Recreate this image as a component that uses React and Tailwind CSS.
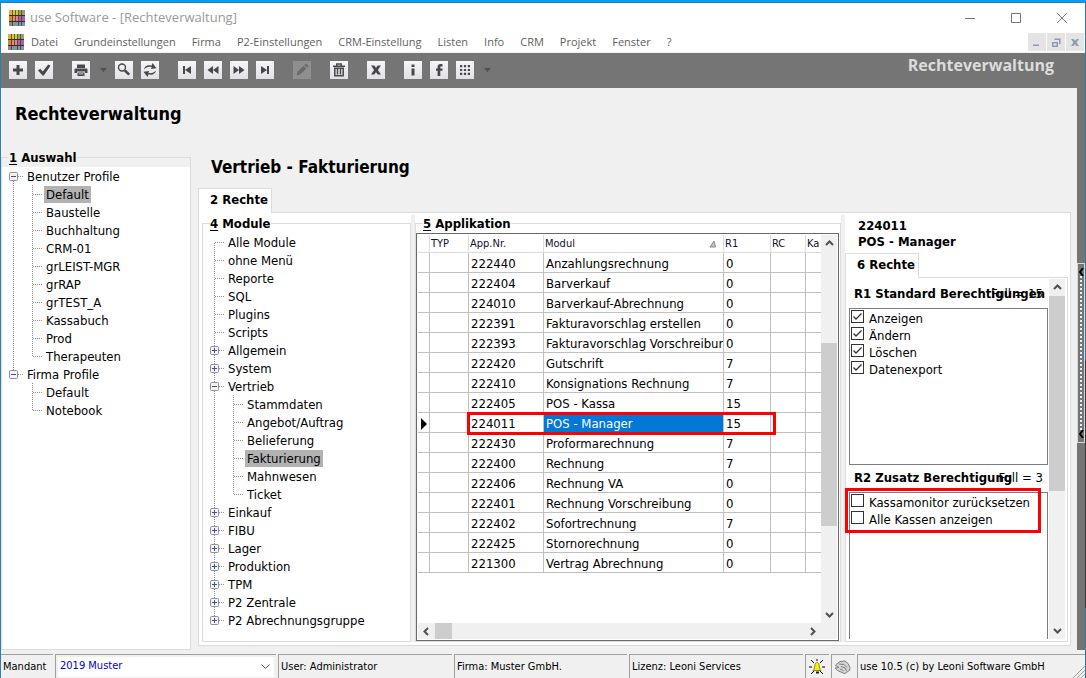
import React from 'react';

const menu = ["Datei", "Grundeinstellungen", "Firma", "P2-Einstellungen", "CRM-Einstellung", "Listen", "Info", "CRM", "Projekt", "Fenster", "?"];

const profiles = [
  { label: "Benutzer Profile", depth: 0, toggle: "minus", first: true },
  { label: "Default", depth: 1, through: true, selected: true },
  { label: "Baustelle", depth: 1, through: true },
  { label: "Buchhaltung", depth: 1, through: true },
  { label: "CRM-01", depth: 1, through: true },
  { label: "grLEIST-MGR", depth: 1, through: true },
  { label: "grRAP", depth: 1, through: true },
  { label: "grTEST_A", depth: 1, through: true },
  { label: "Kassabuch", depth: 1, through: true },
  { label: "Prod", depth: 1, through: true },
  { label: "Therapeuten", depth: 1, through: true, last: true },
  { label: "Firma Profile", depth: 0, toggle: "minus", last: true },
  { label: "Default", depth: 1 },
  { label: "Notebook", depth: 1, last: true },
];

const modules = [
  { label: "Alle Module", depth: 0, first: true },
  { label: "ohne Menü", depth: 0 },
  { label: "Reporte", depth: 0 },
  { label: "SQL", depth: 0 },
  { label: "Plugins", depth: 0 },
  { label: "Scripts", depth: 0 },
  { label: "Allgemein", depth: 0, toggle: "plus" },
  { label: "System", depth: 0, toggle: "plus" },
  { label: "Vertrieb", depth: 0, toggle: "minus" },
  { label: "Stammdaten", depth: 1, through: true },
  { label: "Angebot/Auftrag", depth: 1, through: true },
  { label: "Belieferung", depth: 1, through: true },
  { label: "Fakturierung", depth: 1, through: true, selected: true },
  { label: "Mahnwesen", depth: 1, through: true },
  { label: "Ticket", depth: 1, through: true, last: true },
  { label: "Einkauf", depth: 0, toggle: "plus" },
  { label: "FIBU", depth: 0, toggle: "plus" },
  { label: "Lager", depth: 0, toggle: "plus" },
  { label: "Produktion", depth: 0, toggle: "plus" },
  { label: "TPM", depth: 0, toggle: "plus" },
  { label: "P2 Zentrale", depth: 0, toggle: "plus" },
  { label: "P2 Abrechnungsgruppe", depth: 0, toggle: "plus", last: true },
];

const apps = [
  ["222440", "Anzahlungsrechnung", "0"],
  ["222404", "Barverkauf", "0"],
  ["224010", "Barverkauf-Abrechnung", "0"],
  ["222391", "Fakturavorschlag erstellen", "0"],
  ["222393", "Fakturavorschlag Vorschreibung", "0"],
  ["222420", "Gutschrift", "7"],
  ["222410", "Konsignations Rechnung", "7"],
  ["222405", "POS - Kassa", "15"],
  ["224011", "POS - Manager", "15"],
  ["222430", "Proformarechnung", "7"],
  ["222400", "Rechnung", "7"],
  ["222406", "Rechnung VA", "0"],
  ["222401", "Rechnung Vorschreibung", "0"],
  ["222402", "Sofortrechnung", "7"],
  ["222425", "Stornorechnung", "0"],
  ["221300", "Vertrag Abrechnung", "0"],
];

const icons = {
  plus: <path d="M7.5 4h3v3.5H14v3h-3.500V14h-3v-3.500H4v-3h3.500z" />,
  check: <path d="M3 9.500l2.200-1.700 2.600 2.800L13.200 3.500l2.300 1.200-6.700 9.800H7.500z" />,
  print: <path d="M5 3.500h8V7H5zM3.500 7.500h11a1 1 0 011 1V12H13v-1.500H5V12H2.500V8.500a1 1 0 011-1zM5.500 11.500h7V15h-7zM6.500 12.500v.8h5v-.8z" fillRule="evenodd" />,
  search: <g fill="none" stroke="currentColor"><circle cx="7" cy="6.500" r="3.500" strokeWidth="1.400" /><path d="M9.800 9.300l4.400 4.400" strokeWidth="2.600" /></g>,
  refresh: <path d="M3 8.500C3.500 5 7 3.500 10.500 4.700L11.500 2l4 5.200-5.700.8 1-1.700C8 5.300 5.500 6 3 8.500zM15 9.500c-.5 3.500-4 5-7.500 3.800L6.500 16l-4-5.200 5.700-.8-1 1.700c2.800 1 5.300.3 7.800-2.200z" />,
  first: <path d="M5 5h2v8H5zM13 5v8L7 9z" />,
  rewind: <path d="M9 5v8L3.500 9zM14.500 5v8L9 9z" />,
  forward: <path d="M3.500 5v8L9 9zM9 5v8l5.500-4z" />,
  last: <path d="M5 5v8l6-4zM11 5h2v8h-2z" />,
  edit: <path d="M3.500 14.500l1-3.800 6-6 2.800 2.800-6 6zM11.300 3.900l.9-.9c.5-.5 1-.5 1.500 0l1.300 1.300c.5.500.5 1 0 1.500l-.9.900z" />,
  trash: <g fill="none" stroke="currentColor" strokeWidth="1.500"><path d="M3 5.200h12M6.800 5V3h4.400v2M4.800 7v7.800h8.400V7M7.500 7.500v6M10.500 7.500v6M4 7.200h10" /></g>,
  close: <path d="M4 4.500h3.300L9 6.700l1.700-2.200H14L10.900 9l3.100 4.500h-3.300L9 11.300l-1.700 2.200H4L7.100 9z" />,
  info: <path d="M7.500 3.500h3V6h-3zM7.500 7.500h3v7h-3z" />,
  facebook: <path d="M12.500 3.200v2.300h-1.300c-.7 0-.9.300-.9.900v1.100h2.200v2.200h-2.200V15H7.600V9.700H6V7.500h1.600V6c0-2 1-3 2.900-3 .9 0 1.500.1 2 .2z" />,
  grid: <path d="M4 4h2.200v2.200H4zM7.900 4h2.200v2.200H7.900zM11.800 4H14v2.200h-2.200zM4 7.900h2.200v2.200H4zM7.900 7.900h2.200v2.200H7.900zM11.800 7.900H14v2.200h-2.200zM4 11.800h2.200V14H4zM7.900 11.800h2.200V14H7.900zM11.800 11.800H14V14h-2.200z" />,
};

const toolbar = [
  ["plus", "check"],
  ["print", "arrow"],
  ["search", "refresh"],
  ["first", "rewind", "forward", "last"],
  ["edit"],
  ["trash"],
  ["close"],
  ["info", "facebook", "grid", "arrow"],
];

const Logo = () => (
  <svg viewBox="0 0 16 16" className="size-4 shrink-0" shapeRendering="crispEdges" aria-hidden="true">
    <rect width="16" height="16" fill="#8a8a72" />
    <path d="M0 0h4v5H0z" fill="#e0b03c" />
    <path d="M4 0h6v5H4z" fill="#cfd02c" />
    <path d="M10 0h6v5h-6z" fill="#9aa070" />
    <path d="M0 6h4v5H0z" fill="#d48a1e" />
    <path d="M4 6h6v5H4z" fill="#dc8a86" />
    <path d="M10 6h6v5h-6z" fill="#a765a8" />
    <path d="M0 12h4v4H0z" fill="#8f8a86" />
    <path d="M4 12h12v4H4z" fill="#7d96a4" />
    <path d="M0 5h16v1H0zM0 11h16v1H0z" fill="#3a2c2c" />
    <path d="M3 0h1v16H3zM6 0h1v12H6zM9 0h1v16H9zM12 0h1v16h-1z" fill="#3a2c2c" fillOpacity="0.7" />
  </svg>
);

const Chevron = ({ dir }) => {
  const d = { up: "M1 6l3.500-3.500L8 6", down: "M1 3l3.500 3.500L8 3", left: "M6 1L2.500 4.500 6 8", right: "M3 1l3.500 3.500L3 8" }[dir];
  return (
    <svg viewBox="0 0 9 9" className="size-[9px]" fill="none" stroke="#505050" strokeWidth="2" aria-hidden="true"><path d={d} /></svg>
  );
};

const Guide = ({ first, last, toggle, elbow = true }) => (
  <svg viewBox="0 0 16 18" className="w-4 h-[18px] shrink-0" fill="none" aria-hidden="true">
    <path d={`M4.500 ${first ? 10 : 0}V${last ? 10 : 18}`} stroke="#909090" strokeDasharray="1 1" />
    {elbow && <path d="M5 9.500h10" stroke="#909090" strokeDasharray="1 1" />}
    {toggle && (
      <>
        <rect x="0.500" y="5.500" width="8" height="8" rx="1" fill="#f4f4f4" stroke="#919191" />
        <path d="M2 9.500h5" stroke="#3c50a0" />
        {toggle === "plus" && <path d="M4.500 7v5" stroke="#3c50a0" />}
      </>
    )}
  </svg>
);

const Tree = ({ items }) => (
  <ul className="pl-[7px] text-[13px] leading-[17px]">
    {items.map((item, i) => (
      <li key={i} className="flex h-[18px] items-center whitespace-nowrap">
        {item.depth === 1 && (
          <span className="w-[19px] shrink-0">{item.through && <Guide elbow={false} />}</span>
        )}
        {item.toggle ? (
          <button type="button" aria-label={item.label + " umschalten"}><Guide {...item} /></button>
        ) : (
          <Guide {...item} />
        )}
        <button type="button" className={`px-0.5 ${item.selected ? 'bg-[#b2b2b2]' : ''}`}>{item.label}</button>
      </li>
    ))}
  </ul>
);

const Legend = ({ num, text }) => (
  <legend className="ml-[7px] h-5 text-[13px] leading-[22px] font-bold"><span className="underline underline-offset-2">{num}</span> {text}</legend>
);

const CheckRow = ({ label, checked }) => (
  <label className="flex h-[17px] items-center gap-[5px] whitespace-nowrap">
    <span className="relative size-[13px] shrink-0 mb-1">
      <input type="checkbox" defaultChecked={checked} className="peer block size-[13px] appearance-none border border-[#333] bg-white" />
      <svg viewBox="0 0 13 13" className="absolute inset-0 hidden peer-checked:block pointer-events-none" fill="none" stroke="#333" strokeWidth="1.300"><path d="M2.500 6.500L5 9l5.500-5.500" /></svg>
    </span>
    {label}
  </label>
);

const StatusCell = ({ className, children }) => (
  <div className={`flex items-center border-l border-t border-[#a0a0a0] pl-0.5 whitespace-nowrap ${className}`}>{children}</div>
);

const App = () => {
  return (
    <div className="h-screen min-h-[640px] flex flex-col overflow-hidden bg-[#f0f0f0] text-black font-['DejaVu_Sans_Condensed','DejaVu_Sans',sans-serif]">
      <div className="h-[3px] shrink-0 bg-[#0a9bf2] border-b border-[#2b7db0]"></div>

      <div className="flex-1 min-h-0 flex">
        <div className="flex-1 min-w-0 flex flex-col border-l border-[#2a82b0]">

          {/* Title bar */}
          <header className="shrink-0 bg-white font-['Open_Sans',sans-serif]">
            <div className="flex h-[29px] items-center pl-2 text-[13px] text-[#999]">
              <Logo />
              <span className="ml-[5px] flex-1 pt-px">use Software - [Rechteverwaltung]</span>
              <div className="flex gap-9 pr-[18px]">
                <button type="button" aria-label="Minimieren"><svg viewBox="0 0 10 10" className="size-[10px]" stroke="#777"><path d="M0 5.500h10" /></svg></button>
                <button type="button" aria-label="Maximieren"><svg viewBox="0 0 10 10" className="size-[10px]" fill="none" stroke="#777"><path d="M.5.500h9v9h-9z" /></svg></button>
                <button type="button" aria-label="Schließen"><svg viewBox="0 0 10 10" className="size-[10px]" stroke="#777"><path d="M0 0l10 10M10 0L0 10" /></svg></button>
              </div>
            </div>
            <div className="flex h-[21px] items-center border-b border-[#f0f0f0] pl-[7px] text-[11px] text-[#5f5f5f]">
              <Logo />
              <nav className="ml-[7px] flex flex-1 gap-4 whitespace-nowrap pt-px">
                {menu.map((m) => <button key={m} type="button">{m}</button>)}
              </nav>
              <div className="flex gap-px pr-px">
                {["M5 11.500h6v1.500H5z", "M5 9h6v5H5zM6.500 10.500v2h3v-2zM7.500 5.500h6v5.500h-1.500V7h-4.500z", "M5 6h2.500l1.500 2 1.500-2H13l-2.500 3.500L13 13h-2.500L9 11l-1.500 2H5l2.500-3.500z"].map((d, i) => (
                  <button key={i} type="button" aria-label={["Fenster minimieren", "Fenster wiederherstellen", "Fenster schließen"][i]} className="size-[18px] bg-[#e4e4e4]">
                    <svg viewBox="0 0 18 18" className="size-[18px]" fill="#8b9bb0" fillRule="evenodd"><path d={d} /></svg>
                  </button>
                ))}
              </div>
            </div>
          </header>

          {/* Toolbar */}
          <div className="flex h-[35px] shrink-0 items-center bg-[#757575] pl-2 pb-px">
            <div className="flex flex-1 gap-[19px]">
              {toolbar.map((group, i) => (
                <div key={i} className={`flex gap-2 ${i === 1 ? '-mr-[13px]' : ''}`}>
                  {group.map((name) => name === "arrow" ? (
                    <button key={name} type="button" aria-label="Auswahl" className="px-0.5">
                      <svg viewBox="0 0 7 4" className="w-[7px] h-1" fill="#505050"><path d="M0 0h7L3.500 4z" /></svg>
                    </button>
                  ) : (
                    <button key={name} type="button" aria-label={name} className={`size-[18px] ${name === "edit" ? 'bg-[#8f8f8f] text-[#6a6a6a]' : 'bg-linear-to-b from-[#f6f6f8] to-[#e0e0e6] text-[#484848]'}`}>
                      <svg viewBox="0 0 18 18" className="size-[18px]" fill="currentColor">{icons[name]}</svg>
                    </button>
                  ))}
                </div>
              ))}
            </div>
            <span className="mb-[11px] pr-[31px] text-base font-bold text-[#dcdcdc] font-['Open_Sans',sans-serif]">Rechteverwaltung</span>
          </div>

          <div className="flex-1 min-h-0 flex">
            <main className="flex-1 min-w-0 flex flex-col">
              <h1 className="flex h-[59px] shrink-0 items-center pl-[14px] pb-2 text-lg font-bold">Rechteverwaltung</h1>

              <div className="flex flex-1 min-h-0 gap-[7px] pr-[6px]">
                <fieldset className="flex w-[190px] shrink-0 flex-col border border-[#dcdcdc]">
                  <Legend num="1" text="Auswahl" />
                  <div className="h-full bg-white">
                    <Tree items={profiles} />
                  </div>
                </fieldset>

                <section className="flex flex-1 min-w-0 flex-col pb-1">
                  <h2 className="h-[41px] shrink-0 pl-[13px] text-[17px] leading-10 font-bold">Vertrieb - Fakturierung</h2>
                  <div className="flex shrink-0">
                    <button type="button" className="relative -mb-px h-[25px] border border-b-0 border-[#dcdcdc] bg-white pl-[11px] pr-[3px] pb-0.5 text-[13px] font-bold">2 Rechte</button>
                  </div>

                  <div className="flex flex-1 min-h-0 border border-[#dcdcdc] bg-white pl-[3px] pr-px pb-[3px]">
                    <fieldset className="w-[209px] shrink-0 border border-[#dcdcdc]">
                      <Legend num="4" text="Module" />
                      <Tree items={modules} />
                    </fieldset>
                    <div className="mt-0.5 w-[4px] shrink-0 bg-[#f0f0f0]"></div>

                    <fieldset className="flex flex-1 min-w-0 flex-col border border-[#dcdcdc]">
                      <Legend num="5" text="Applikation" />
                      <div className="flex h-full flex-col border border-[#696969] p-px mr-px">
                        <div className="flex flex-1 min-h-0">
                          <div className="flex-1 min-w-0 overflow-hidden">
                            <table className="w-full table-fixed border-separate border-spacing-0 text-[13px] leading-4 whitespace-nowrap">
                              <colgroup>
                                <col className="w-3" />
                                <col className="w-[39px]" />
                                <col className="w-[75px]" />
                                <col className="w-[180px]" />
                                <col className="w-[47px]" />
                                <col className="w-[35px]" />
                                <col />
                              </colgroup>
                              <thead>
                                <tr className="text-left text-[11px] text-[#101030]">
                                  {["", "TYP", "App.Nr.", "Modul", "R1", "RC", "Ka"].map((h, i) => (
                                    <th key={i} className="h-[18px] overflow-hidden border-r border-b border-[#dcdcdc] pl-px font-normal last:border-r-0">
                                      {h === "Modul" ? (
                                        <span className="flex items-center justify-between pr-[6px]">
                                          Modul
                                          <svg viewBox="0 0 8 8" className="size-2" fill="#c0c0c0" stroke="#8c8c8c"><path d="M1 7L5 1l1.500 6z" /></svg>
                                        </span>
                                      ) : h}
                                    </th>
                                  ))}
                                </tr>
                              </thead>
                              <tbody>
                                {apps.map(([nr, name, r1]) => {
                                  const active = nr === "224011";
                                  return (
                                    <tr key={nr} className="[&>td]:h-5 [&>td]:border-r [&>td]:border-b [&>td]:border-[#c0c0c0] [&>td]:pt-0.5 [&>td:last-child]:border-r-0">
                                      <td>{active && <svg viewBox="0 0 6 12" className="ml-[3px] w-[6px] h-3"><path d="M0 0l6 6-6 6z" /></svg>}</td>
                                      <td></td>
                                      <td className="relative pl-0.5">
                                        {nr}
                                        {active && <span className="absolute -left-0.5 -top-px z-10 h-[23px] w-[309px] border-3 border-[#ff0000]"></span>}
                                      </td>
                                      <td className={`overflow-hidden pl-0.5 ${active ? 'bg-[#0078d7] text-white' : ''}`}>{name}</td>
                                      <td className="pl-0.5">{r1}</td>
                                      <td></td>
                                      <td></td>
                                    </tr>
                                  );
                                })}
                              </tbody>
                            </table>
                          </div>
                          <div className="flex w-4 shrink-0 flex-col bg-[#f0f0f0]">
                            <button type="button" aria-label="Nach oben" className="flex h-[17px] items-center justify-center"><Chevron dir="up" /></button>
                            <div className="mt-[91px] h-[183px] bg-[#cdcdcd]"></div>
                            <button type="button" aria-label="Nach unten" className="mt-auto flex h-[17px] items-center justify-center"><Chevron dir="down" /></button>
                          </div>
                        </div>
                        <div className="flex h-4 shrink-0 bg-[#f0f0f0] pr-4">
                          <button type="button" aria-label="Nach links" className="flex w-[17px] items-center justify-center"><Chevron dir="left" /></button>
                          <div className="w-[17px] bg-[#cdcdcd]"></div>
                          <button type="button" aria-label="Nach rechts" className="ml-auto flex w-[17px] items-center justify-center"><Chevron dir="right" /></button>
                        </div>
                      </div>
                    </fieldset>
                    <div className="mt-0.5 w-[4px] shrink-0 bg-[#f0f0f0]"></div>

                    <section className="flex w-[224px] shrink-0 flex-col text-[13px]">
                      <div className="h-10 shrink-0 pl-[13px] pt-[5px] leading-4 font-bold">
                        <p>224011</p>
                        <p>POS - Manager</p>
                      </div>
                      <div className="flex shrink-0">
                        <button type="button" className="relative -mb-px h-[25px] border border-[#dcdcdc] border-b-0 bg-white pl-[11px] pr-[3px] pb-0.5 font-bold">6 Rechte</button>
                      </div>
                      <div className="mr-px flex flex-1 min-h-0 border border-[#dcdcdc] pl-[3px] pt-px pb-0.5">
                        <div className="flex flex-1 min-w-0 flex-col">
                          <div className="relative h-[29px] shrink-0 pl-[5px] leading-[30px] whitespace-nowrap">
                            <b>R1 Standard Berechtigungen</b>
                            <span className="absolute right-[5px] top-0">Full = 15</span>
                          </div>
                          <div className="h-[157px] shrink-0 border border-[#7b7b84] pl-px pt-px">
                            <CheckRow label="Anzeigen" checked />
                            <CheckRow label="Ändern" checked />
                            <CheckRow label="Löschen" checked />
                            <CheckRow label="Datenexport" checked />
                          </div>
                          <div className="relative h-[27px] shrink-0 pl-[5px] leading-[26px] whitespace-nowrap">
                            <b>R2 Zusatz Berechtigung</b>
                            <span className="absolute right-[5px] top-0">Full = 3</span>
                          </div>
                          <div className="relative flex-1 border border-b-0 border-[#7b7b84] pl-px pt-px">
                            <CheckRow label="Kassamonitor zurücksetzen" />
                            <CheckRow label="Alle Kassen anzeigen" />
                            <span className="pointer-events-none absolute -left-[5px] -top-[5px] h-[45px] w-[196px] border-3 border-[#ff0000]"></span>
                          </div>
                        </div>
                        <div className="ml-px mr-0.5 flex w-4 shrink-0 flex-col bg-[#f0f0f0]">
                          <button type="button" aria-label="Nach oben" className="flex h-[17px] items-center justify-center"><Chevron dir="up" /></button>
                          <div className="h-[195px] bg-[#cdcdcd]"></div>
                          <button type="button" aria-label="Nach unten" className="mt-auto flex h-[17px] items-center justify-center"><Chevron dir="down" /></button>
                        </div>
                      </div>
                    </section>
                  </div>
                </section>
              </div>
            </main>

            {/* collapsed side panel */}
            <aside className="w-2 shrink-0 bg-[#757575] pt-[175px]">
              <button type="button" aria-label="Seitenleiste öffnen" className="flex h-[180px] w-full flex-col items-center justify-between border border-[#d8d8d8] bg-[#757575] py-1">
                <svg viewBox="0 0 5 8" className="w-[5px] h-2" fill="none" stroke="#000" strokeWidth="2"><path d="M4 0L1 4l3 4" /></svg>
                <span className="flex-1 border-l-2 border-dotted border-[#e4f0fa]"></span>
                <svg viewBox="0 0 5 8" className="w-[5px] h-2" fill="none" stroke="#000" strokeWidth="2"><path d="M4 0L1 4l3 4" /></svg>
              </button>
            </aside>
          </div>

          {/* Status bar */}
          <footer className="flex h-[28px] shrink-0 gap-0.5 pt-1 text-[11px]">
            <StatusCell className="w-[52px] border-l-0 pt-px"><label htmlFor="mandant">Mandant</label></StatusCell>
            <StatusCell className="w-[221px]">
              <span className="relative w-full pr-0.5">
                <select id="mandant" className="block h-5 w-full appearance-none bg-white pl-0.5 text-[#0000e0]">
                  <option>2019 Muster</option>
                </select>
                <svg viewBox="0 0 9 6" className="pointer-events-none absolute right-[6px] top-[7px] w-[9px] h-[6px]" fill="none" stroke="#555"><path d="M.5.500l4 4 4-4" /></svg>
              </span>
            </StatusCell>
            <StatusCell className="w-[174px] pt-px">User: Administrator</StatusCell>
            <StatusCell className="w-[173px] pt-px">Firma: Muster GmbH.</StatusCell>
            <StatusCell className="w-[174px] pt-px">Lizenz: Leoni Services</StatusCell>
            <StatusCell className="w-6">
              <svg viewBox="0 0 18 16" className="w-[18px] h-4" aria-hidden="true">
                <path d="M9 0v2M3 1l3 3M15 1l-3 3M1 8h3M14 8h3M3 15l3-3M15 15l-3-3" stroke="#000" />
                <path d="M5 11.500c1.500-1.500 1.500-3 1.800-5C7 4.500 8 3.500 9 3.500s2 1 2.200 3c.3 2 .3 3.500 1.800 5z" fill="#f5f000" stroke="#8a8a20" />
                <path d="M8 12.500h3v2H8z" fill="#222" />
              </svg>
            </StatusCell>
            <StatusCell className="w-6">
              <svg viewBox="0 0 18 16" className="w-[18px] h-4" fill="#d4d4d4" stroke="#808080" aria-hidden="true">
                <path d="M1.500 6L6 2.500 11 2l3 2.500 2 4-.5 3-2.500 1.500-2 1.500-2-.5-5.500-2.500-2.500-2.500 4-.5-3.500-2z" />
                <path d="M5 5l5 .5 3 3M7 7.500l4 1.500 1.500 3M6 10l3.500 1.500" fill="none" />
              </svg>
            </StatusCell>
            <StatusCell className="relative flex-1 pt-px">
              use 10.5 (c) by Leoni Software GmbH
              <svg viewBox="0 0 12 12" className="absolute right-0 bottom-0 size-3" stroke="#a0a0a0" aria-hidden="true"><path d="M0 12L12 0M4 12l8-8M8 12l4-4" /></svg>
            </StatusCell>
          </footer>
        </div>

        {/* window edge */}
        <div className="flex w-px shrink-0 flex-col bg-[#2a78ac]">
          <div className="mt-[358px] h-[247px] bg-[#38383c]"></div>
        </div>
      </div>
    </div>
  );
};

export default App;
